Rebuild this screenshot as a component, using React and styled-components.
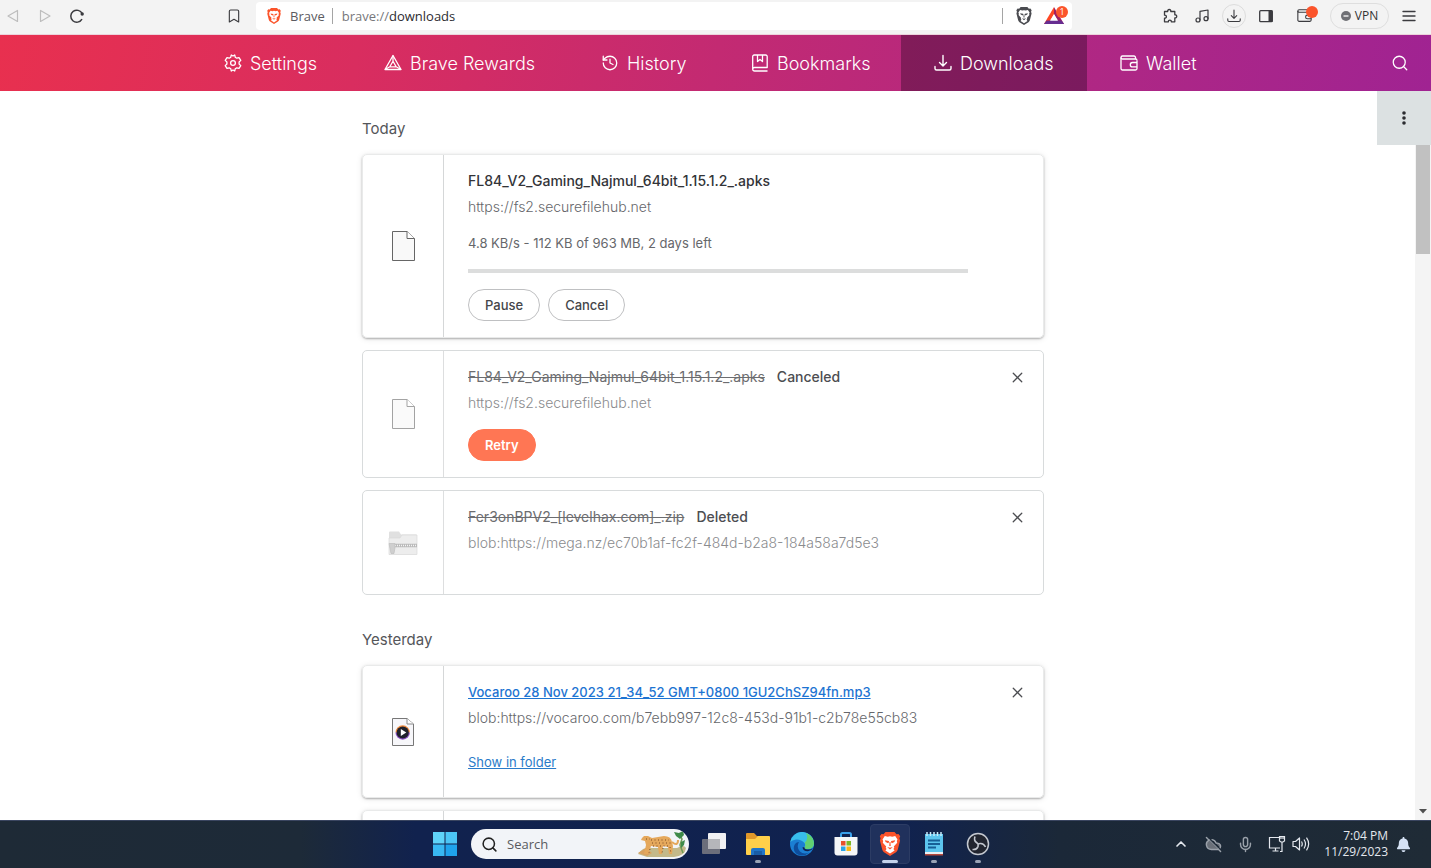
import styled, { createGlobalStyle } from "styled-components"
import {
    LuBookmark,
    LuChevronUp,
    LuCloudOff,
    LuDownload,
    LuHistory,
    LuMenu,
    LuMic,
    LuMusic,
    LuSearch,
    LuX,
} from "react-icons/lu"
import { FaBell } from "react-icons/fa6"

const GlobalStyle = createGlobalStyle`
    * {
        box-sizing: border-box;
    }
    body {
        margin: 0;
        font-family: Inter, "Liberation Sans", sans-serif;
        background-color: white;
    }
    button {
        font-family: inherit;
        cursor: pointer;
    }
    svg {
        display: block;
        flex-shrink: 0;
    }
`

const Window = styled.div`
    display: flex;
    flex-direction: column;
    height: 100vh;
    overflow: hidden;
`

/* browser toolbar */

const Toolbar = styled.header`
    display: grid;
    grid-template-columns: 256px minmax(0, 1fr) 359px;
    align-items: center;
    height: 35px;
    flex-shrink: 0;
    padding-bottom: 3px;
    background-color: #f3f3f3;
    border-bottom: 1px solid #ecd3dc;
    font-family: "Open Sans", sans-serif;
    font-size: 13px;
    color: #333;
`

const ToolGroup = styled.div`
    display: flex;
    align-items: center;
    gap: 8px;
    justify-content: ${(props) => (props.$end ? "flex-end" : "flex-start")};
    padding: 0 10px 0 1px;
    .bookmark {
        margin-left: auto;
    }
`

const ToolButton = styled.button`
    display: flex;
    align-items: center;
    justify-content: center;
    position: relative;
    width: ${(props) => (props.$wide ? "36px" : "24px")};
    height: 24px;
    padding: 0;
    border: 1px solid ${(props) => (props.$ring ? "#dcdcdc" : "transparent")};
    border-radius: 12px;
    background: none;
    color: ${(props) => (props.$disabled ? "#bdbdbd" : "#3b3b3f")};
`

const AddressBar = styled.div`
    display: flex;
    align-items: center;
    height: 28px;
    padding-left: 10px;
    border-radius: 4px;
    background-color: white;
    .site {
        margin-left: 8px;
        color: #5b5b5f;
    }
`

const Divider = styled.span`
    width: 1px;
    height: 16px;
    margin: 0 9px 0 7px;
    background-color: #a5a5a5;
`

const Url = styled.div`
    flex: 1;
    color: #77777b;
    span {
        color: #2c2c30;
    }
`

const Count = styled.span`
    display: flex;
    align-items: center;
    justify-content: center;
    position: absolute;
    top: 1px;
    right: 3px;
    width: 12px;
    height: 12px;
    border-radius: 6px;
    background-color: #fb542b;
    color: white;
    font-size: 9px;
`

const VpnButton = styled.button`
    display: flex;
    align-items: center;
    justify-content: center;
    gap: 4px;
    width: 59px;
    height: 26px;
    padding: 0;
    border: 1px solid #dedede;
    border-radius: 13px;
    background: none;
    color: #333;
    font-size: 12px;
`

/* gradient navigation */

const Nav = styled.nav`
    display: grid;
    grid-template-columns: 1fr 160px 217px 150px 183px 186px 145px 1fr;
    height: 56px;
    flex-shrink: 0;
    padding-right: 8px;
    background: linear-gradient(100deg, #e8304f 0%, #d92d5f 25%, #c32a72 50%, #ae2785 78%, #a02392 100%);
`

const NavTab = styled.a`
    display: flex;
    align-items: center;
    gap: 8px;
    padding-left: 33px;
    background-color: ${(props) => (props.$active ? "rgba(30, 5, 30, 0.36)" : "transparent")};
    color: white;
    font-size: 18px;
    font-weight: 300;
    text-decoration: none;
    white-space: nowrap;
`

const NavSearch = styled.button`
    justify-self: end;
    width: 32px;
    margin-right: 6px;
    padding: 0 6px;
    border: none;
    background: none;
    color: white;
`

/* downloads list */

const Page = styled.div`
    display: flex;
    flex: 1;
    min-height: 0;
    position: relative;
`

const List = styled.main`
    flex: 1;
    min-width: 0;
    overflow: hidden;
    padding: 28px 9px 0 0;
`

const Day = styled.section`
    width: 682px;
    max-width: 100%;
    margin: 0 auto 35px;
    h2 {
        margin: 0 0 15px;
        color: #55565a;
        font-size: 15px;
        font-weight: 400;
        line-height: 20px;
    }
`

const Card = styled.article`
    display: flex;
    min-height: ${(props) => (props.$faded ? "105px" : "133px")};
    margin-bottom: 12px;
    border: 1px solid ${(props) => (props.$faded ? "#d8dbdc" : "#e9eaea")};
    border-radius: 5px;
    box-shadow: ${(props) => (props.$faded ? "none" : "0 1px 2px rgba(0, 0, 0, 0.28), 0 1px 6px rgba(0, 0, 0, 0.1)")};
`

const FileIcon = styled.div`
    display: flex;
    align-items: center;
    justify-content: center;
    width: 81px;
    flex-shrink: 0;
    border-right: 1px solid #d5d7d8;
    opacity: ${(props) => (props.$faded ? "0.8" : "1")};
`

const Details = styled.div`
    flex: 1;
    min-width: 0;
    padding: 16px 24px;
    font-size: 13px;
    line-height: 20px;
    color: #66676b;
`

const NameRow = styled.div`
    display: flex;
    gap: 12px;
    margin-bottom: 6px;
    color: #4c4d51;
    font-size: 14px;
    font-weight: 500;
`

const FileName = styled.span`
    color: #333438;
`

const GoneName = styled.s`
    color: #6c6d70;
    font-weight: 400;
`

const FileLink = styled.a`
    color: #1d74d2;
    font-size: 13px;
    text-decoration: underline;
`

const Source = styled.div`
    color: ${(props) => (props.$faded ? "#8a8b8e" : "#66676b")};
    font-size: 14px;
    font-weight: 300;
`

const Status = styled.div`
    margin-top: 16px;
`

const Progress = styled.div`
    width: 500px;
    max-width: 100%;
    height: 4px;
    margin-top: 16px;
    background-color: #dcdddd;
`

const Actions = styled.div`
    display: flex;
    align-items: center;
    gap: 8px;
    height: 32px;
    margin-top: 16px;
`

const LinkRow = styled(Actions)`
    height: 36px;
    a {
        color: #2a7bc9;
    }
`

const PillButton = styled.button`
    height: 32px;
    padding: 0 16px;
    border: 1px solid ${(props) => (props.$primary ? "#ff7654" : "#bfc0c2")};
    border-radius: 16px;
    background-color: ${(props) => (props.$primary ? "#ff7654" : "white")};
    color: ${(props) => (props.$primary ? "white" : "#45464a")};
    font-size: 13px;
    font-weight: ${(props) => (props.$primary ? "600" : "500")};
`

const RemoveButton = styled.button`
    display: flex;
    align-items: center;
    justify-content: center;
    width: 24px;
    height: 24px;
    margin: 14px 14px 0 0;
    padding: 0;
    border: none;
    background: none;
    color: #4c4d51;
`

const Scrollbar = styled.div`
    display: flex;
    flex-direction: column;
    justify-content: space-between;
    align-items: center;
    width: 16px;
    padding: 17px 0 6px;
    background-color: #f4f4f4;
`

const Thumb = styled.div`
    width: 14px;
    height: 146px;
    background-color: #c1c1c1;
`

const MoreButton = styled.button`
    display: flex;
    align-items: center;
    justify-content: center;
    position: absolute;
    top: 0;
    right: 0;
    width: 54px;
    height: 54px;
    border: none;
    background-color: #dce1e2;
    color: #2b2c30;
`

/* windows taskbar */

const Taskbar = styled.footer`
    display: grid;
    grid-template-columns: 1fr auto 1fr;
    height: 48px;
    flex-shrink: 0;
    padding-right: 8px;
    background: linear-gradient(90deg, #1e2a36 0%, #1d2a38 21%, #11224e 29%, #10224f 63%, #1b2838 74%, #1f2b36 100%);
    box-shadow: inset 0 1px 0 #3a4560;
    font-family: "Open Sans", sans-serif;
    color: white;
`

const Apps = styled.div`
    grid-column: 2;
    display: flex;
    align-items: center;
    gap: 4px;
`

const AppButton = styled.button`
    display: flex;
    align-items: center;
    justify-content: center;
    position: relative;
    width: 40px;
    height: 40px;
    padding: 0;
    border: 1px solid ${(props) => (props.$active ? "#2c3c64" : "transparent")};
    border-radius: 4px;
    background-color: ${(props) => (props.$active ? "#20315c" : "transparent")};
    &::after {
        content: "";
        display: ${(props) => (props.$running || props.$active ? "block" : "none")};
        position: absolute;
        bottom: 0;
        width: ${(props) => (props.$active ? "16px" : "6px")};
        height: 3px;
        border-radius: 2px;
        background-color: ${(props) => (props.$active ? "#c3d2ec" : "#99a3b5")};
    }
`

const SearchBox = styled.label`
    display: flex;
    align-items: center;
    gap: 9px;
    width: 218px;
    height: 30px;
    margin: 0 1px 0 2px;
    padding: 0 2px 0 10px;
    border-radius: 15px;
    background-color: #f2f4f8;
    color: #222;
    overflow: hidden;
    input {
        flex: 1;
        min-width: 0;
        padding: 0;
        border: none;
        outline: none;
        background: none;
        font-family: "Open Sans", sans-serif;
        font-size: 13px;
    }
    input::placeholder {
        color: #595b60;
        opacity: 1;
    }
`

const Tray = styled.div`
    display: flex;
    align-items: center;
    justify-content: flex-end;
    gap: 8px;
    padding-right: 12px;
    color: #e4e8ee;
`

const TrayPair = styled.div`
    display: flex;
`

const TrayIcon = styled.span`
    display: flex;
    justify-content: center;
    align-items: center;
    width: 24px;
    color: ${(props) => (props.$dim ? "#9aa1aa" : "#e4e8ee")};
`

const Clock = styled.time`
    width: 67px;
    font-size: 12px;
    line-height: 16px;
    text-align: right;
    white-space: nowrap;
`

const Triangle = ({ back }) => (
    <svg width="14" height="14" viewBox="0 0 14 14" fill="none" stroke="currentColor" strokeWidth="1.2" strokeLinejoin="round">
        <path d={back ? "M11.5 1.5v11L2 7z" : "M2.5 1.5v11L12 7z"} />
    </svg>
)

const ReloadIcon = () => (
    <svg width="16" height="16" viewBox="0 0 16 16" fill="none" stroke="currentColor" strokeWidth="1.5">
        <path d="M13 11.2A6 6 0 1 1 13.2 5.600" />
        <circle cx="13.200" cy="6" r="1.700" fill="currentColor" stroke="none" />
    </svg>
)

const BraveIcon = ({ size, color = "#fb542b" }) => (
    <svg width={size} height={size} viewBox="0 0 24 24">
        <path fill={color} d="M7.5 0h9l2 2.2 2-.3 1.7 2.3-.8 2 .7 2.3-2.3 9c-.3 1.1-.9 2-1.8 2.7L12 24l-6-3.800c-.9-.7-1.5-1.600-1.800-2.700L1.900 8.500l.7-2.300-.8-2L3.500 1.900l2 .3z" />
        <path fill="white" d="M12 4.200l2.200.5 3-.7 2.300 3.400-.7 1.700.4 1.600-3.400 3.800.5 1.300-.9 1.200 1.200 1.500-4.600 3.100-4.600-3.100 1.200-1.500-.9-1.200.5-1.300L4.800 10.700l.4-1.600-.7-1.700L6.800 4l3 .7z" />
        <path fill={color} d="M6.800 8.300l4 .6.300 1.200-1 1.200L7.600 10zM17.200 8.300l-4 .6-.3 1.200 1 1.200L16.400 10zM11.500 10h1l.2 4h-1.400zM9.300 14.900l2.700.9 2.700-.9-1.500 1.700L12 17.500l-1.200-.9z" />
    </svg>
)

const RewardsLogo = () => (
    <svg width="20" height="18" viewBox="0 0 20 18">
        <path fill="#ff4724" d="M10 0L0 17h4l6-10z" />
        <path fill="#9e1f63" d="M10 0l10 17h-4L10 7z" />
        <path fill="#662d91" d="M0 17l2.500-3.500h15L20 17z" />
        <path fill="white" d="M10 7.500l3.600 6H6.400z" />
    </svg>
)

const PuzzleIcon = () => (
    <svg width="16" height="16" viewBox="0 0 16 16" fill="none" stroke="currentColor" strokeWidth="1.3" strokeLinejoin="round">
        <path d="M2.500 3.500h3.200c-.5-2.700 3.600-2.700 3.100 0h4v3.300c2.600-.4 2.600 3.500 0 3.100v3.900H9.300c.3-2.200-3.200-2.200-2.900 0H2.500v-3.600c2.500.3 2.500-3.300 0-3z" />
    </svg>
)

const SidebarIcon = () => (
    <svg width="14" height="14" viewBox="0 0 14 14">
        <rect x="0.700" y="1.700" width="12.600" height="11" rx="1" fill="none" stroke="currentColor" strokeWidth="1.300" />
        <rect x="9.500" y="1.500" width="4" height="11.500" fill="currentColor" />
    </svg>
)

const TrayDownloadIcon = ({ size }) => (
    <svg width={size} height={size} viewBox="0 0 18 18" fill="none" stroke="currentColor" strokeWidth="1.400" strokeLinecap="round" strokeLinejoin="round">
        <path d="M9 1.500v10M5.500 8.500L9 12l3.500-3.500M1 12.500v2Q1 16 2.500 16h13q1.500 0 1.500-1.500v-2" />
    </svg>
)

const WalletIcon = ({ size }) => (
    <svg width={size} height={size} viewBox="0 0 18 18" fill="none" stroke="currentColor" strokeWidth="1.300" strokeLinejoin="round">
        <path d="M17 6.500V14.500a1.500 1.500 0 0 1-1.500 1.500h-13A1.500 1.500 0 0 1 1 14.500V3.500A1.500 1.500 0 0 1 2.500 2H14a1.500 1.500 0 0 1 1.500 1.500V5" />
        <path d="M1 3.500A1.500 1.500 0 0 0 2.500 5h13A1.500 1.500 0 0 1 17 6.500" />
        <path d="M17 8.500h-4.500a2.200 2.200 0 0 0 0 4.400H17" />
    </svg>
)

const GearIcon = () => (
    <svg width="18" height="18" viewBox="0 0 18 18" fill="none" stroke="currentColor" strokeWidth="1.300" strokeLinejoin="round">
        <path d="M7.300 1l-.6 2.300a6 6 0 0 0-1.500.9L3 3.600 1.200 6.400l1.700 1.600v2L1.200 11.600 3 14.400l2.200-.6q.7.600 1.500.9L7.300 17l1.700-1 1.700 1 .6-2.300q.8-.3 1.500-.9l2.200.6 1.800-2.800-1.700-1.600V8l1.700-1.600L15 3.600l-2.200.6a6 6 0 0 0-1.500-.9L10.700 1 9 2z" />
        <circle cx="9" cy="9" r="2.400" />
    </svg>
)

const RewardsIcon = () => (
    <svg width="18" height="18" viewBox="0 0 18 18" fill="none" stroke="currentColor" strokeWidth="1.300" strokeLinejoin="round">
        <path d="M9 1.500L17 15.500H1z" />
        <path d="M9 7.200l3.200 5.600H5.800zM9 1.500v5.700M1 15.500l4.800-2.700M17 15.500l-4.800-2.700" />
    </svg>
)

const BookIcon = () => (
    <svg width="18" height="18" viewBox="0 0 18 18" fill="none" stroke="currentColor" strokeWidth="1.300" strokeLinejoin="round">
        <path d="M16.500 17h-13A1.800 1.800 0 0 1 1.700 15.200V2.500A1.500 1.500 0 0 1 3.200 1h11.500a1.500 1.500 0 0 1 1.500 1.500v11H3.500a1.800 1.800 0 0 0-1.800 1.700M6.500 1v6.500L9 5.500l2.500 2V1" />
    </svg>
)

const DocumentIcon = ({ faded }) => (
    <svg width="24" height="30" viewBox="0 0 24 30" fill="#f9f9f9" stroke={faded ? "#8d8d8d" : "#666"}>
        <path d="M1.500.5h14.500l7.500 7v22h-22z" />
        <path d="M16 .5v7h7.500" fill="white" />
    </svg>
)

const ZipIcon = () => (
    <svg width="30" height="24" viewBox="0 0 30 24">
        <path d="M1 1.500Q1 .5 2 .5h9l2 3h15.500v20H1z" fill="#d9d9d9" />
        <path d="M1 7h11l2-3h15v19.500H1z" fill="#e9e9e9" stroke="#cfcfcf" strokeWidth="0.600" />
        <path d="M7 14.500h22" stroke="#a9a9a9" strokeWidth="3.500" />
        <path d="M7 14.500h22" stroke="#f2f2f2" strokeWidth="1.600" strokeDasharray="1 1" />
        <path d="M1 12.500h6v4l-1 6H3l-1-5z" fill="#c4c4c4" stroke="#aaa" strokeWidth="0.600" />
    </svg>
)

const MediaIcon = () => (
    <svg width="22" height="28" viewBox="0 0 22 28">
        <path d="M.5.5H15l6.500 5.500v21.500H.5z" fill="#f7f7fa" stroke="#777" />
        <path d="M15 .5V6h6.500" fill="white" stroke="#888" />
        <path d="M3.500 14.500a7.200 7.200 0 0 1 14.400 0" fill="#f08a3c" />
        <path d="M3.500 14.500a7.200 7.200 0 0 0 14.400 0" fill="#8a4fc0" />
        <circle cx="10.700" cy="14.500" r="6.100" fill="#20212b" />
        <path d="M8.800 11v7l5.500-3.500z" fill="white" />
    </svg>
)

const DotsIcon = () => (
    <svg width="4" height="16" viewBox="0 0 4 16" fill="currentColor">
        <circle cx="2" cy="3" r="1.800" />
        <circle cx="2" cy="8" r="1.800" />
        <circle cx="2" cy="13" r="1.800" />
    </svg>
)

const StartIcon = () => (
    <svg width="24" height="24" viewBox="0 0 24 24">
        <path fill="#5fd3f8" d="M0 0h11.500v11.500H0z" />
        <path fill="#4cc5f5" d="M12.500 0H24v11.500H12.500z" />
        <path fill="#38b8f2" d="M0 12.500h11.500V24H0z" />
        <path fill="#1fa3ec" d="M12.500 12.500H24V24H12.500z" />
    </svg>
)

const JaguarArt = () => (
    <svg width="50" height="28" viewBox="0 0 50 28">
        <path fill="#c3b98a" d="M1 24q6-8 14-6l25 0q7-4 9 0-1 8-12 9H10z" />
        <path fill="#d9a15f" d="M1 23l8-5 6 5-5 3z" />
        <path fill="none" stroke="#6f9a55" strokeWidth="1.500" d="M42 3l3 6-2 6 3 8" />
        <path fill="#3f8a4a" d="M37 2l5 1 4-2 1 4-4 4-4-3zM44 12l4-2-1 5-3 3z" />
        <path fill="#e5a85c" d="M5 8l2-2 4 0 4 2 12-2q7 0 8 6l1 4-1 8h-3l-1-7-5-1-1 8h-3l-1-7-7-1-3 8h-4l2-9-1-4-4-1z" />
        <path fill="none" stroke="#e5a85c" strokeWidth="2" d="M35 12q6 5 6-2" />
        <path fill="none" stroke="#7b4b25" strokeWidth="1" strokeDasharray="1 2.500" d="M14 10h18M15 13h19M16 16h15M33 17l1 7M9 9h4M13 19l-1 4M26 18l-1 5" />
    </svg>
)

const TaskViewIcon = () => (
    <svg width="26" height="24" viewBox="0 0 26 24">
        <rect x="7" y="1" width="18" height="16" rx="1" fill="#f1f1f3" />
        <rect x="1" y="7" width="18" height="15" rx="1" fill="#75777f" opacity="0.900" />
        <path fill="#b5b6ba" d="M7 7h12v10H7z" />
    </svg>
)

const FolderIcon = () => (
    <svg width="26" height="24" viewBox="0 0 26 24">
        <path fill="#e0982a" d="M1 2q0-1 1-1h7l3 3h12v6H1z" />
        <path fill="#ffd04a" d="M1 7h9l3-3h11q1 0 1 1v17q0 1-1 1H2q-1 0-1-1z" />
        <path fill="#2176c8" d="M6 23v-5q0-2 2-2h10q2 0 2 2v5h-3v-3H9v3z" />
        <path fill="#1a5da5" d="M9 19h8v4H9z" />
    </svg>
)

const EdgeIcon = () => (
    <svg width="24" height="24" viewBox="0 0 24 24">
        <circle cx="12" cy="12" r="12" fill="#1b7fd3" />
        <path fill="#38bdea" d="M.2 10A12 12 0 0 1 24 11q0 6-6.500 6-3 0-3-1.800 1.500-1.700 0-4.200Q11 7 6 7.500 2 8 .2 10z" />
        <path fill="#61d071" d="M16 1a12 12 0 0 1 8 10.500Q23.500 17 17.500 17q-3 0-3-1.800 1.800-2 .2-4.600Q19 7 16 1z" />
        <path fill="#0e4d9c" d="M9 10q-3 5 1 9.500 3.500 3.500 9.500 1-7 5.500-13.500 1Q2 17 5 12q1.500-2 4-2z" />
        <path fill="#11224e" d="M14.500 15.200q-.5 2 3 2.300 3 .3 5.500-1.500-1.500 3-5 3.300-5 .2-5.500-4z" />
    </svg>
)

const StoreIcon = () => (
    <svg width="24" height="26" viewBox="0 0 24 26">
        <path d="M7 7V3.500Q7 2 8.500 2h7Q17 2 17 3.500V7" fill="none" stroke="#3aa0ea" strokeWidth="2" />
        <path fill="#f4f6f8" d="M.5 6h23v15.500q0 3-3 3h-17q-3 0-3-3z" />
        <path fill="#e8512c" d="M7 10h4.500v4.500H7z" />
        <path fill="#7cb829" d="M12.500 10H17v4.500h-4.500z" />
        <path fill="#2aa5e8" d="M7 15.500h4.500V20H7z" />
        <path fill="#f9b916" d="M12.500 15.500H17V20h-4.500z" />
    </svg>
)

const NotepadIcon = () => (
    <svg width="20" height="26" viewBox="0 0 20 26">
        <path fill="#5cc5ee" d="M1 3h18v20H1z" />
        <path fill="#e9eef2" d="M1 21h18v3H1z" />
        <path fill="#b6493d" d="M1 23h18v1.500H1z" />
        <path stroke="#175f96" strokeWidth="1.800" d="M4 9.500h12M4 13h12M4 16.500h8" />
        <path stroke="#c7ecfa" strokeWidth="1.500" d="M3 1v4M6.500 1v4M10 1v4M13.500 1v4M17 1v4" />
    </svg>
)

const ObsIcon = () => (
    <svg width="24" height="24" viewBox="0 0 24 24" fill="none" stroke="#c4c8d0">
        <circle cx="12" cy="12" r="10.500" fill="#22252f" strokeWidth="1.500" />
        <path strokeWidth="1.600" d="M9 4.500q-1.500 4 1.500 6 1.500 1 1.500 2M19.500 15q-2-4-5.500-3.500-1.500.3-2 1M6.500 17.500q4.500.5 5.500-3 .2-1 0-2" />
    </svg>
)

const NetworkIcon = () => (
    <svg width="18" height="18" viewBox="0 0 18 18" fill="none" stroke="currentColor" strokeWidth="1.200">
        <path d="M11 2.500H1.500v10.500H12M4.500 16h6M7.500 13v3M11.500 1.500h5V6l-1.500 1h-2l-1.500-1zM14 7v9.500h-2M13 1.500V4M15 1.500V4" />
    </svg>
)

const SpeakerIcon = () => (
    <svg width="18" height="16" viewBox="0 0 18 16" fill="none" stroke="currentColor" strokeWidth="1.200" strokeLinejoin="round">
        <path d="M1 5.500h2.500L7.500 2v12L3.500 10.500H1zM9.500 5.500q1.500 2.500 0 5M12 3.500q3 4.500 0 9M14.500 1.700q4.300 6.300 0 12.600" />
    </svg>
)

const VpnIcon = () => (
    <svg width="10" height="10" viewBox="0 0 10 10">
        <circle cx="5" cy="5" r="5" fill="#6f7075" />
        <path d="M2.500 5h5" stroke="white" strokeWidth="1.300" />
    </svg>
)

function BrowserToolbar() {
    return (
        <Toolbar>
            <ToolGroup>
                <ToolButton $disabled aria-label="Back"><Triangle back /></ToolButton>
                <ToolButton $disabled aria-label="Forward"><Triangle /></ToolButton>
                <ToolButton aria-label="Reload"><ReloadIcon /></ToolButton>
                <ToolButton className="bookmark" aria-label="Bookmark"><LuBookmark size={16} strokeWidth={1.7} /></ToolButton>
            </ToolGroup>
            <AddressBar>
                <BraveIcon size={16} />
                <span className="site">Brave</span>
                <Divider />
                <Url>brave://<span>downloads</span></Url>
                <Divider />
                <ToolButton aria-label="Shields"><BraveIcon size={18} color="#4a4b50" /></ToolButton>
                <ToolButton $wide aria-label="Rewards"><RewardsLogo /><Count>1</Count></ToolButton>
            </AddressBar>
            <ToolGroup $end>
                <ToolButton aria-label="Extensions"><PuzzleIcon /></ToolButton>
                <ToolButton aria-label="Media"><LuMusic size={16} strokeWidth={1.8} /></ToolButton>
                <ToolButton $ring aria-label="Downloads"><TrayDownloadIcon size={14} /></ToolButton>
                <ToolButton aria-label="Sidebar"><SidebarIcon /></ToolButton>
                <ToolButton $wide aria-label="Wallet"><WalletIcon size={15} /><Count /></ToolButton>
                <VpnButton><VpnIcon />VPN</VpnButton>
                <ToolButton aria-label="Menu"><LuMenu size={18} strokeWidth={1.8} /></ToolButton>
            </ToolGroup>
        </Toolbar>
    )
}

function NavBar() {
    return (
        <Nav>
            <span />
            <NavTab href="#settings"><GearIcon />Settings</NavTab>
            <NavTab href="#rewards"><RewardsIcon />Brave Rewards</NavTab>
            <NavTab href="#history"><LuHistory size={18} strokeWidth={1.700} />History</NavTab>
            <NavTab href="#bookmarks"><BookIcon />Bookmarks</NavTab>
            <NavTab href="#downloads" $active><TrayDownloadIcon size={18} />Downloads</NavTab>
            <NavTab href="#wallet"><WalletIcon size={18} />Wallet</NavTab>
            <NavSearch aria-label="Search downloads"><LuSearch size={18} strokeWidth={1.700} /></NavSearch>
        </Nav>
    )
}

function Remove() {
    return <RemoveButton aria-label="Remove from list"><LuX size={17} strokeWidth={1.800} /></RemoveButton>
}

function Downloads() {
    return (
        <Page>
            <List>
                <Day>
                    <h2>Today</h2>
                    <Card>
                        <FileIcon><DocumentIcon /></FileIcon>
                        <Details>
                            <NameRow><FileName>FL84_V2_Gaming_Najmul_64bit_1.15.1.2_.apks</FileName></NameRow>
                            <Source>https://fs2.securefilehub.net</Source>
                            <Status>4.8 KB/s - 112 KB of 963 MB, 2 days left</Status>
                            <Progress role="progressbar" aria-label="Download progress" />
                            <Actions>
                                <PillButton>Pause</PillButton>
                                <PillButton>Cancel</PillButton>
                            </Actions>
                        </Details>
                    </Card>
                    <Card $faded>
                        <FileIcon $faded><DocumentIcon faded /></FileIcon>
                        <Details>
                            <NameRow><GoneName>FL84_V2_Gaming_Najmul_64bit_1.15.1.2_.apks</GoneName>Canceled</NameRow>
                            <Source $faded>https://fs2.securefilehub.net</Source>
                            <Actions><PillButton $primary>Retry</PillButton></Actions>
                        </Details>
                        <Remove />
                    </Card>
                    <Card $faded>
                        <FileIcon $faded><ZipIcon /></FileIcon>
                        <Details>
                            <NameRow><GoneName>Fer3onBPV2_[levelhax.com]_.zip</GoneName>Deleted</NameRow>
                            <Source $faded>blob:https://mega.nz/ec70b1af-fc2f-484d-b2a8-184a58a7d5e3</Source>
                        </Details>
                        <Remove />
                    </Card>
                </Day>
                <Day>
                    <h2>Yesterday</h2>
                    <Card>
                        <FileIcon><MediaIcon /></FileIcon>
                        <Details>
                            <NameRow><FileLink href="#file">Vocaroo 28 Nov 2023 21_34_52 GMT+0800 1GU2ChSZ94fn.mp3</FileLink></NameRow>
                            <Source>blob:https://vocaroo.com/b7ebb997-12c8-453d-91b1-c2b78e55cb83</Source>
                            <LinkRow><a href="#folder">Show in folder</a></LinkRow>
                        </Details>
                        <Remove />
                    </Card>
                    <Card>
                        <FileIcon />
                    </Card>
                </Day>
            </List>
            <Scrollbar>
                <Thumb />
                <svg width="8" height="5" viewBox="0 0 8 5"><path d="M0 0h8L4 4.500z" fill="#505050" /></svg>
            </Scrollbar>
            <MoreButton aria-label="More actions"><DotsIcon /></MoreButton>
        </Page>
    )
}

function WindowsTaskbar() {
    return (
        <Taskbar>
            <Apps>
                <AppButton aria-label="Start"><StartIcon /></AppButton>
                <SearchBox>
                    <LuSearch size={17} strokeWidth={2.200} />
                    <input type="text" placeholder="Search" aria-label="Search" />
                    <JaguarArt />
                </SearchBox>
                <AppButton aria-label="Task view"><TaskViewIcon /></AppButton>
                <AppButton $running aria-label="File Explorer"><FolderIcon /></AppButton>
                <AppButton aria-label="Edge"><EdgeIcon /></AppButton>
                <AppButton aria-label="Store"><StoreIcon /></AppButton>
                <AppButton $active aria-label="Brave"><BraveIcon size={24} /></AppButton>
                <AppButton $running aria-label="Notepad"><NotepadIcon /></AppButton>
                <AppButton $running aria-label="OBS"><ObsIcon /></AppButton>
            </Apps>
            <Tray>
                <TrayIcon><LuChevronUp size={16} strokeWidth={2.500} /></TrayIcon>
                <TrayIcon $dim><LuCloudOff size={17} fill="#6a7079" /></TrayIcon>
                <TrayIcon $dim><LuMic size={17} /></TrayIcon>
                <TrayPair>
                    <TrayIcon><NetworkIcon /></TrayIcon>
                    <TrayIcon><SpeakerIcon /></TrayIcon>
                </TrayPair>
                <Clock>7:04 PM<br />11/29/2023</Clock>
                <FaBell size={15} color="#d5e2f5" />
            </Tray>
        </Taskbar>
    )
}

function App() {
    return (
        <Window>
            <GlobalStyle />
            <BrowserToolbar />
            <NavBar />
            <Downloads />
            <WindowsTaskbar />
        </Window>
    )
}

export default App
